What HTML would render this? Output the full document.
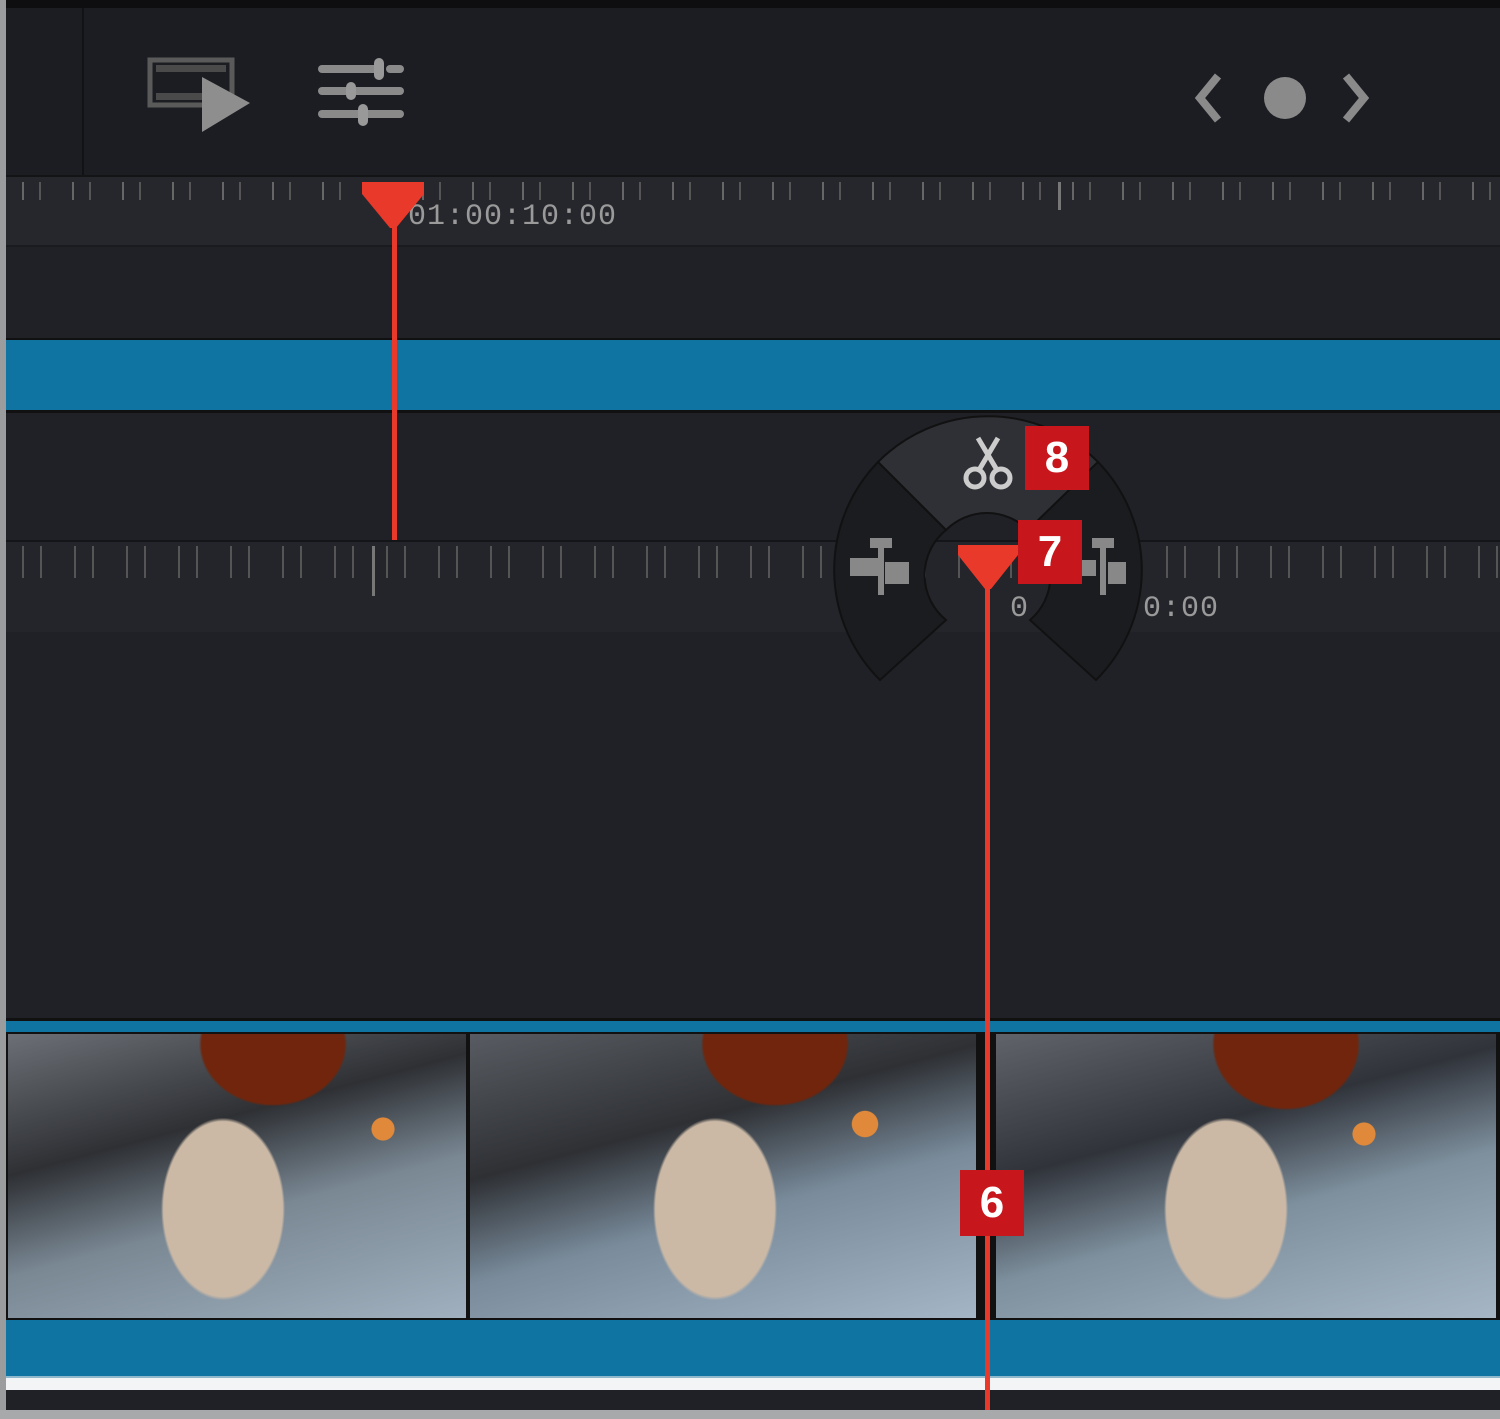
<!DOCTYPE html>
<html><head><style>
html,body{margin:0;padding:0}
body{width:1500px;height:1419px;background:#202127;position:relative;overflow:hidden;font-family:"Liberation Sans",sans-serif}
.a{position:absolute}
.badge{position:absolute;background:#c8161d;color:#fff;font-weight:bold;font-size:44px;text-align:center;line-height:64px;width:64px;height:64px}
.tc{position:absolute;color:#9a9a9a;font-family:"Liberation Mono",monospace;font-size:30px;letter-spacing:1px}
</style></head><body>
<div class="a" style="left:0;top:0;width:1500px;height:8px;background:#0e0e10"></div>
<div class="a" style="left:0;top:0;width:6px;height:1419px;background:#9a9c9e"></div>
<div class="a" style="left:0;top:1410px;width:1500px;height:9px;background:#a7a9ab"></div>
<div class="a" style="left:6px;top:8px;width:1494px;height:167px;background:#1c1d22"></div>
<div class="a" style="left:82px;top:8px;width:2px;height:167px;background:#111214"></div>
<svg class="a" style="left:140px;top:55px" width="120" height="80" viewBox="0 0 120 80">
 <rect x="10" y="5" width="82" height="45" fill="none" stroke="#5a5a5a" stroke-width="5"/>
 <rect x="16" y="10" width="70" height="7" fill="#4a4a4a"/><rect x="16" y="38" width="70" height="7" fill="#4a4a4a"/>
 <path d="M62 22 L110 48 L62 77 Z" fill="#8e8e8e"/>
</svg>
<svg class="a" style="left:318px;top:58px" width="90" height="70" viewBox="0 0 90 70">
 <g stroke="#8a8a8a" stroke-width="8" stroke-linecap="round">
 <line x1="4" y1="11" x2="60" y2="11"/><line x1="72" y1="11" x2="82" y2="11"/>
 <line x1="4" y1="33" x2="82" y2="33"/><line x1="4" y1="56" x2="82" y2="56"/></g>
 <rect x="56" y="0" width="10" height="22" rx="5" fill="#999"/>
 <rect x="28" y="24" width="10" height="18" rx="5" fill="#999"/>
 <rect x="40" y="46" width="10" height="22" rx="5" fill="#999"/>
</svg>
<svg class="a" style="left:1190px;top:70px" width="200" height="56" viewBox="0 0 200 56">
 <path d="M28 6 L10 28 L28 50" fill="none" stroke="#8a8a8a" stroke-width="8"/>
 <circle cx="95" cy="28" r="21" fill="#8a8a8a"/>
 <path d="M156 6 L174 28 L156 50" fill="none" stroke="#8a8a8a" stroke-width="8"/>
</svg>
<div class="a" style="left:6px;top:175px;width:1494px;height:70px;background:#26272c;border-top:2px solid #131416"></div>
<div class="a" style="left:6px;top:182px;width:1494px;height:18px;background:repeating-linear-gradient(90deg,transparent 0 16px,#666 16px 18px,transparent 18px 33px,#555 33px 35px,transparent 35px 50px)"></div>
<div class="a" style="left:1058px;top:182px;width:3px;height:28px;background:#777"></div>
<div class="tc" style="left:408px;top:200px">01:00:10:00</div>
<div class="a" style="left:6px;top:245px;width:1494px;height:2px;background:#1a1b1f"></div>
<div class="a" style="left:6px;top:338px;width:1494px;height:2px;background:#111"></div>
<div class="a" style="left:6px;top:340px;width:1494px;height:70px;background:#0f74a2"></div>
<div class="a" style="left:6px;top:410px;width:1494px;height:3px;background:#111"></div>
<div class="a" style="left:6px;top:540px;width:1494px;height:90px;background:#24252a;border-top:2px solid #141518"></div>
<div class="a" style="left:6px;top:546px;width:1494px;height:32px;background:repeating-linear-gradient(90deg,transparent 0 16px,#555 16px 18px,transparent 18px 34px,#555 34px 36px,transparent 36px 52px)"></div>
<div class="a" style="left:372px;top:546px;width:3px;height:50px;background:#777"></div>
<div class="tc" style="left:1143px;top:592px">0:00</div>
<svg class="a" style="left:820px;top:400px" width="340" height="300" viewBox="820 400 340 300">
 <path d="M878 462 A155 155 0 0 1 1098 462 L1028 530 A58 58 0 0 0 946 530 Z" fill="#2e3035" stroke="#111" stroke-width="2"/>
 <path d="M878 462 A155 155 0 0 0 880 680 L946 620 A58 58 0 0 1 946 530 Z" fill="#1b1c20" stroke="#111" stroke-width="2"/>
 <path d="M1098 462 A155 155 0 0 1 1096 680 L1030 620 A58 58 0 0 0 1028 530 Z" fill="#1b1c20" stroke="#111" stroke-width="2"/>
 <g fill="#888"><rect x="870" y="538" width="22" height="10"/><rect x="878" y="545" width="6" height="50"/><rect x="850" y="558" width="28" height="18"/><rect x="885" y="562" width="24" height="22"/>
 <rect x="1092" y="538" width="22" height="10"/><rect x="1100" y="545" width="6" height="50"/><rect x="1076" y="560" width="20" height="16"/><rect x="1108" y="562" width="18" height="22"/></g>
 <g stroke="#ccc" stroke-width="5" fill="none"><circle cx="975" cy="478" r="9"/><circle cx="1001" cy="478" r="9"/><path d="M979 470 L998 438 M997 470 L978 438"/></g>
</svg>
<div class="tc" style="left:1010px;top:592px">0</div>
<div class="a" style="left:392px;top:200px;width:5px;height:340px;background:#e8392a"></div>
<svg class="a" style="left:362px;top:182px" width="62" height="50"><path d="M0 0 H62 V12 L34 46 H28 L0 12 Z" fill="#e8392a"/></svg>
<div class="a" style="left:6px;top:1018px;width:1494px;height:3px;background:#111"></div>
<div class="a" style="left:6px;top:1021px;width:1494px;height:11px;background:#0f74a2"></div>
<div class="a" style="left:6px;top:1032px;width:1494px;height:288px;background:#111"></div>
<div class="a" style="left:8px;top:1034px;width:458px;height:284px;background:radial-gradient(ellipse 95px 80px at 265px 10px,#70250c 75%,transparent 78%),radial-gradient(ellipse 85px 125px at 215px 175px,#cbb9a6 70%,transparent 73%),radial-gradient(circle 14px at 375px 95px,#e0893a 80%,transparent 85%),linear-gradient(165deg,#6c7076,#2e3034 35%,#7a8894 60%,#a0b0be)"></div>
<div class="a" style="left:470px;top:1034px;width:506px;height:284px;background:radial-gradient(ellipse 95px 80px at 305px 10px,#70250c 75%,transparent 78%),radial-gradient(ellipse 85px 125px at 245px 175px,#cbb9a6 70%,transparent 73%),radial-gradient(circle 16px at 395px 90px,#e0893a 80%,transparent 85%),linear-gradient(165deg,#585c62,#2e3034 35%,#7a8c9c 60%,#a4b6c6)"></div>
<div class="a" style="left:996px;top:1034px;width:500px;height:284px;background:radial-gradient(ellipse 95px 85px at 290px 10px,#70250c 75%,transparent 78%),radial-gradient(ellipse 85px 125px at 230px 175px,#cbb9a6 70%,transparent 73%),radial-gradient(circle 14px at 368px 100px,#e0893a 80%,transparent 85%),linear-gradient(165deg,#60646a,#30333a 35%,#7e909e 60%,#a6b6c4)"></div>
<div class="a" style="left:6px;top:1320px;width:1494px;height:56px;background:#0f74a2"></div>
<div class="a" style="left:6px;top:1376px;width:1494px;height:12px;background:#f2f4f5;border-top:2px solid #8fb8cc"></div>
<div class="a" style="left:6px;top:1390px;width:1494px;height:20px;background:#202126"></div>
<div class="a" style="left:985px;top:580px;width:5px;height:830px;background:#e8392a"></div>
<svg class="a" style="left:958px;top:545px" width="60" height="48"><path d="M0 0 H60 V10 L33 44 H27 L0 10 Z" fill="#e8392a"/></svg>
<div class="badge" style="left:1025px;top:426px">8</div>
<div class="badge" style="left:1018px;top:520px">7</div>
<div class="badge" style="left:960px;top:1170px;height:66px;width:64px;line-height:66px">6</div>
</body></html>
